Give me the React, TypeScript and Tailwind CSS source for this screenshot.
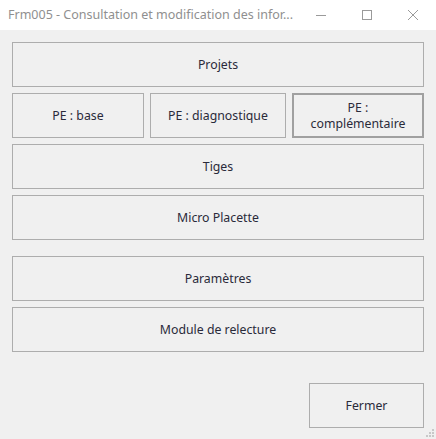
import type { ReactNode } from 'react'

const font = { fontFamily: '"Segoe UI", "Noto Sans", "Open Sans", sans-serif' }

function FormButton({
  children,
  className = '',
  active = false,
}: {
  children: ReactNode
  className?: string
  active?: boolean
}) {
  return (
    <button
      type="button"
      className={`flex h-[45px] items-center justify-center bg-[#f0f0f0] text-[12.3px] leading-[16px] text-[#2a2a3a] ${
        active ? 'border-2 border-[#a0a0a0]' : 'border border-[#adadad]'
      } ${className}`}
    >
      {children}
    </button>
  )
}

function TitleBar() {
  return (
    <div className="flex h-[30px] items-center bg-white pl-[8px]">
      <div className="flex-1 truncate text-[12.5px] text-[#8f8f8f]">
        Frm005 - Consultation et modification des infor...
      </div>
      <div className="flex h-full items-center">
        <div className="flex h-full w-[46px] items-center justify-center">
          <svg width="10" height="10" viewBox="0 0 10 10">
            <path d="M0 5.5h10" stroke="#9a9a9a" strokeWidth="1" />
          </svg>
        </div>
        <div className="flex h-full w-[46px] items-center justify-center">
          <svg width="10" height="10" viewBox="0 0 10 10">
            <rect x="0.5" y="0.5" width="9" height="9" fill="none" stroke="#9a9a9a" strokeWidth="1" />
          </svg>
        </div>
        <div className="flex h-full w-[46px] items-center justify-center">
          <svg width="10" height="10" viewBox="0 0 10 10">
            <path d="M0 0L10 10M10 0L0 10" stroke="#9a9a9a" strokeWidth="1" />
          </svg>
        </div>
      </div>
    </div>
  )
}

export default function App() {
  return (
    <div className="flex h-[439px] w-[436px] flex-col bg-[#f0f0f0]" style={font}>
      <TitleBar />
      <div className="relative flex flex-1 flex-col px-[12px] pt-[12px]">
        <div className="flex flex-col gap-[6px]">
          <FormButton>Projets</FormButton>
          <div className="flex gap-[6px]">
            <FormButton className="w-[132px]">PE : base</FormButton>
            <FormButton className="w-[136px]">PE : diagnostique</FormButton>
            <FormButton className="w-[132px] flex-col" active>
              <span>PE :</span>
              <span>complémentaire</span>
            </FormButton>
          </div>
          <FormButton>Tiges</FormButton>
          <FormButton>Micro Placette</FormButton>
        </div>
        <div className="mt-[16px] flex flex-col gap-[6px]">
          <FormButton>Paramètres</FormButton>
          <FormButton>Module de relecture</FormButton>
        </div>
        <div className="mt-[31px] flex justify-end">
          <FormButton className="w-[115px]">Fermer</FormButton>
        </div>
        <div className="absolute bottom-[2px] right-[2px] grid grid-cols-3 gap-[1px]">
          {[0, 0, 1, 0, 1, 1, 1, 1, 1].map((v, i) => (
            <span key={i} className={`h-[2px] w-[2px] ${v ? 'bg-[#c8c8c8]' : ''}`} />
          ))}
        </div>
      </div>
    </div>
  )
}
